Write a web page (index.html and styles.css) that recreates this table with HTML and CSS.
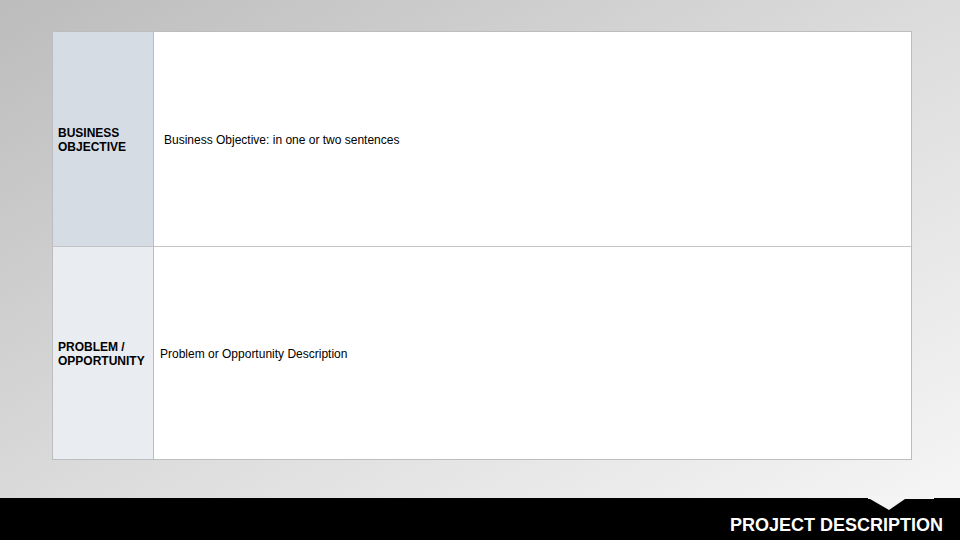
FILE: index.html
```html
<!DOCTYPE html>
<html lang="en">
<head>
  <meta charset="UTF-8" />
  <title>Project Description</title>
  <link rel="stylesheet" href="styles.css">
</head>
<body>
  <div class="slide">
    <main class="content">
      <div class="grid">
        <div class="label label-1">BUSINESS<br>OBJECTIVE</div>
        <div class="cell cell-1">Business Objective: in one or two sentences</div>
        <div class="label label-2">PROBLEM /<br>OPPORTUNITY</div>
        <div class="cell cell-2">Problem or Opportunity Description</div>
      </div>
    </main>

    <footer>
      <svg class="notch" width="70" height="14" viewBox="0 0 70 14">
        <polygon points="0,0 66,0 66,2 37,2 21,13 2,2 0,2" fill="#f4f4f4" />
      </svg>
      <h1>PROJECT DESCRIPTION</h1>
    </footer>
  </div>
</body>
</html>
```

FILE: styles.css
```css
* { box-sizing: border-box; margin: 0; padding: 0; }
body {
  font-family: "Liberation Sans", Arial, sans-serif;
  color: #000;
  width: 960px;
  height: 540px;
  overflow: hidden;
}
.slide {
  width: 960px;
  height: 540px;
  display: flex;
  flex-direction: column;
  background: linear-gradient(to bottom right, #bcbcbc, #dcdcdc 50%, #f7f7f7);
}
.content {
  flex: 1;
  padding: 31px 0 0 52px;
}
.grid {
  width: 860px;
  height: 429px;
  display: grid;
  grid-template-columns: 101px 1fr;
  grid-template-rows: 215px 1fr;
  border: 1px solid #bdbdbd;
  background: #fff;
}
.label {
  display: flex;
  align-items: center;
  padding-left: 5px;
  font-size: 12px;
  font-weight: 700;
  line-height: 14px;
  border-right: 1px solid #bdbdbd;
}
.label-1 { background: #d6dce4; padding-top: 1px; }
.label-2 { background: #e9ecf1; padding-top: 1px; }
.cell {
  display: flex;
  align-items: center;
  font-size: 12px;
  line-height: 14px;
}
.cell-1 { padding-left: 10px; padding-top: 1px; }
.cell-2 { padding-left: 6px; padding-top: 1px; }
.label-1, .cell-1 { border-bottom: 1px solid #c4c4c4; }

footer {
  position: relative;
  height: 42px;
  background: #000;
  display: flex;
  justify-content: flex-end;
  align-items: flex-end;
  padding: 0 17px 5px 0;
}
.notch {
  position: absolute;
  top: -1px;
  left: 868px;
}
footer h1 {
  color: #fff;
  font-size: 18px;
  font-weight: 700;
  line-height: 20px;
}
```
